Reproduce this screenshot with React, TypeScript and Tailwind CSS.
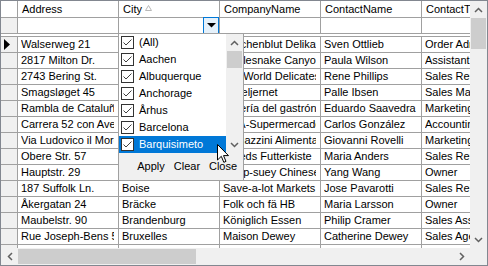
import React from 'react';

type Row = [string, string, string, string, string];

const columns = ['Address', 'City', 'CompanyName', 'ContactName', 'ContactTitle'];

const rows: Row[] = [
  ['Walserweg 21', 'Aachen', 'Drachenblut Delikatessen', 'Sven Ottlieb', 'Order Administrator'],
  ['2817 Milton Dr.', 'Albuquerque', 'Rattlesnake Canyon Grocery', 'Paula Wilson', 'Assistant Sales Representative'],
  ['2743 Bering St.', 'Anchorage', 'Old World Delicatessen', 'Rene Phillips', 'Sales Representative'],
  ['Smagsløget 45', 'Århus', 'Vaffeljernet', 'Palle Ibsen', 'Sales Manager'],
  ['Rambla de Cataluña, 23', 'Barcelona', 'Galería del gastrónomo', 'Eduardo Saavedra', 'Marketing Manager'],
  ['Carrera 52 con Ave. Bolívar #65-98', 'Barquisimeto', 'LILA-Supermercado', 'Carlos González', 'Accounting Manager'],
  ['Via Ludovico il Moro 22', 'Bergamo', 'Magazzini Alimentari Riuniti', 'Giovanni Rovelli', 'Marketing Manager'],
  ['Obere Str. 57', 'Berlin', 'Alfreds Futterkiste', 'Maria Anders', 'Sales Representative'],
  ['Hauptstr. 29', 'Bern', 'Chop-suey Chinese', 'Yang Wang', 'Owner'],
  ['187 Suffolk Ln.', 'Boise', 'Save-a-lot Markets', 'Jose Pavarotti', 'Sales Representative'],
  ['Åkergatan 24', 'Bräcke', 'Folk och fä HB', 'Maria Larsson', 'Owner'],
  ['Maubelstr. 90', 'Brandenburg', 'Königlich Essen', 'Philip Cramer', 'Sales Associate'],
  ['Rue Joseph-Bens 532', 'Bruxelles', 'Maison Dewey', 'Catherine Dewey', 'Sales Agent'],
  ['Cerrito 333', 'Buenos Aires', 'Cactus Comidas para llevar', 'Patricio Simpson', 'Sales Agent'],
];

const cities = ['(All)', 'Aachen', 'Albuquerque', 'Anchorage', 'Århus', 'Barcelona', 'Barquisimeto'];

const Chevron = ({ dir }: { dir: 'up' | 'down' | 'left' | 'right' }) => {
  if (dir === 'up' || dir === 'down') {
    return (
      <svg width="9" height="6" viewBox="0 0 9 6">
        <polyline
          points={dir === 'up' ? '1,5 4.5,1.5 8,5' : '1,1 4.5,4.5 8,1'}
          fill="none"
          stroke="#606060"
          strokeWidth="1.5"
        />
      </svg>
    );
  }
  return (
    <svg width="6" height="9" viewBox="0 0 6 9">
      <polyline
        points={dir === 'left' ? '5,1 1.5,4.5 5,8' : '1,1 4.5,4.5 1,8'}
        fill="none"
        stroke="#606060"
        strokeWidth="1.5"
      />
    </svg>
  );
};

const CheckBox = () => (
  <div className="w-[13px] h-[13px] shrink-0 border border-[#333333] bg-white flex items-center justify-center">
    <svg width="11" height="11" viewBox="0 0 11 11">
      <polyline points="1.5,5.5 4,8 9.5,2.5" fill="none" stroke="#404040" strokeWidth="1" />
    </svg>
  </div>
);

const App = () => {
  return (
    <div className="relative w-[488px] h-[266px] border border-[#828790] bg-white overflow-hidden flex flex-col font-['Liberation_Sans',Arial,sans-serif] text-[11px] text-black">
      <div className="flex h-[247px] shrink-0">
        {/* Grid body */}
        <div className="w-[469px] shrink-0 overflow-hidden flex flex-col">
          {/* Column headers */}
          <div className="flex h-[17px] shrink-0">
            <div className="w-[17px] shrink-0 border-r border-b border-[#a0a0a0] bg-white" />
            {columns.map((col) => (
              <div
                key={col}
                className="w-[101px] shrink-0 border-r border-b border-[#a0a0a0] bg-white pl-[4px] flex items-center overflow-hidden whitespace-nowrap"
              >
                {col}
                {col === 'City' && (
                  <svg width="7" height="6" viewBox="0 0 7 6" className="ml-[3px] mb-[3px]">
                    <polygon points="0.5,5.5 3.5,0.5 6.5,5.5" fill="none" stroke="#b8b8b8" strokeWidth="1" />
                  </svg>
                )}
              </div>
            ))}
          </div>

          {/* Filter row */}
          <div className="flex h-[16px] shrink-0">
            <div className="w-[17px] shrink-0 border-r border-b border-[#a0a0a0] bg-[#f0f0f0]" />
            {columns.map((col) => (
              <div key={col} className="relative w-[101px] shrink-0 border-r border-b border-[#a0a0a0] bg-white">
                {col === 'City' && (
                  <div className="absolute -top-[1px] right-0 w-[16px] h-[17px] border border-[#0078d7] bg-[#e5f1fb] flex items-center justify-center">
                    <svg width="9" height="5" viewBox="0 0 9 5">
                      <polygon points="0,0 9,0 4.5,4.5" fill="black" />
                    </svg>
                  </div>
                )}
              </div>
            ))}
          </div>
          <div className="h-[2px] shrink-0 bg-white" />

          {/* Data rows */}
          <div className="border-t border-[#a0a0a0] flex flex-col">
            {rows.map((row, i) => (
              <div key={i} className="flex h-[16px] shrink-0">
                <div className="w-[17px] shrink-0 border-r border-b border-[#a0a0a0] bg-[#f0f0f0] flex items-center pl-[3px]">
                  {i === 0 && (
                    <svg width="6" height="11" viewBox="0 0 6 11">
                      <polygon points="0,0 6,5.5 0,11" fill="black" />
                    </svg>
                  )}
                </div>
                {row.map((cell, j) => (
                  <div key={j} className="w-[101px] shrink-0 border-r border-b border-[#a0a0a0] pl-[3px]">
                    <div className="mr-[4px] leading-[15px] overflow-hidden whitespace-nowrap">{cell}</div>
                  </div>
                ))}
              </div>
            ))}
          </div>
        </div>

        {/* Vertical scrollbar */}
        <div className="w-[17px] shrink-0 bg-[#f0f0f0] flex flex-col">
          <div className="h-[17px] flex items-center justify-center">
            <Chevron dir="up" />
          </div>
          <div className="px-[1px]">
            <div className="h-[31px] bg-[#cdcdcd]" />
          </div>
          <div className="flex-1" />
          <div className="h-[17px] flex items-center justify-center">
            <Chevron dir="down" />
          </div>
        </div>
      </div>

      {/* Horizontal scrollbar */}
      <div className="flex h-[17px] shrink-0 bg-[#f0f0f0]">
        <div className="w-[17px] flex items-center justify-center">
          <Chevron dir="left" />
        </div>
        <div className="py-[1px]">
          <div className="w-[178px] h-full bg-[#cdcdcd]" />
        </div>
        <div className="flex-1" />
        <div className="w-[17px] flex items-center justify-center">
          <Chevron dir="right" />
        </div>
        <div className="w-[17px] bg-[#f0f0f0]" />
      </div>

      {/* City filter popup */}
      <div className="absolute left-[117px] top-[32px] w-[126px] h-[148px] border border-[#a0a0a0] bg-white flex flex-col">
        <div className="flex h-[119px] shrink-0">
          <div className="w-[107px] flex flex-col">
            {cities.map((city, i) => {
              const selected = i === cities.length - 1;
              return (
                <div
                  key={city}
                  className={`h-[17px] flex items-center pl-[2px] gap-[5px] whitespace-nowrap ${
                    selected ? 'bg-[#0078d7] text-white' : ''
                  }`}
                >
                  <CheckBox />
                  {city}
                </div>
              );
            })}
          </div>
          <div className="w-[17px] bg-[#f0f0f0] flex flex-col">
            <div className="h-[17px] flex items-center justify-center">
              <Chevron dir="up" />
            </div>
            <div className="px-[1px]">
              <div className="h-[17px] bg-[#cdcdcd]" />
            </div>
            <div className="flex-1" />
            <div className="h-[17px] flex items-center justify-center">
              <Chevron dir="down" />
            </div>
          </div>
        </div>
        <div className="flex-1 bg-[#f0f0f0] flex items-center pl-[14px]">
          {['Apply', 'Clear', 'Close'].map((label) => (
            <button key={label} className="w-[36px] text-center leading-[15px]">
              {label}
            </button>
          ))}
        </div>
      </div>

      {/* Mouse pointer */}
      <svg width="13" height="20" viewBox="0 0 13 20" className="absolute left-[216px] top-[143px]">
        <path d="M0.5 0.5 V16 L4.3 12.3 L6.8 18.3 L9 17.4 L6.5 11.6 H11.5 Z" fill="white" stroke="black" strokeWidth="1" />
      </svg>
    </div>
  );
};

export default App;
